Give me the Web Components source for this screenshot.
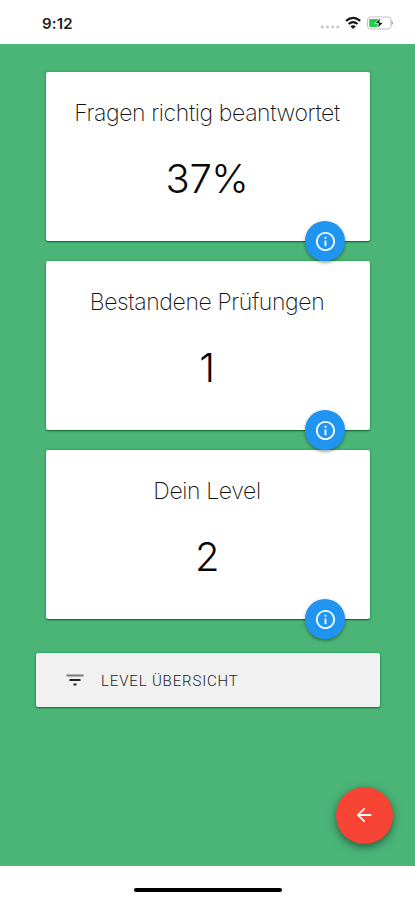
<!DOCTYPE html>
<html lang="de">
<head>
<meta charset="utf-8">
<title>Statistik</title>
<style>
html,body{margin:0;height:100%;background:#fff}
body{font-family:Inter,"Liberation Sans",sans-serif;color:#111}
</style>
</head>
<body>
<stats-app></stats-app>
<script>
const define = (name, html) => customElements.define(name, class extends HTMLElement {
  constructor() {
    super();
    const t = document.createElement('template');
    t.innerHTML = html;
    this.attachShadow({ mode: 'open' }).append(t.content.cloneNode(true));
  }
});

define('status-bar', `
<style>
:host{display:flex;justify-content:space-between;height:44px;box-sizing:border-box;padding:14px 22px 0 42px;background:#fff}
.time{font-size:15px;line-height:19px;font-weight:600;color:#222;letter-spacing:.2px}
svg{display:block}
</style>
<span class="time">9:12</span>
<svg width="77" height="20" viewBox="316 14 77 20">
  <g fill="#c4c4c4"><circle cx="322.2" cy="27" r="1.4"/><circle cx="327.5" cy="27" r="1.4"/><circle cx="332.7" cy="27" r="1.4"/><circle cx="337.8" cy="27" r="1.4"/></g>
  <g fill="none" stroke="#151515" stroke-width="2.2">
    <path d="M346 20.9Q353.1 14.9 360.2 20.9"/>
    <path d="M348.7 24Q353.1 20.2 357.5 24"/>
  </g>
  <path d="M350.4 26.3Q353.1 24.4 355.8 26.3L353.1 29Z" fill="#151515"/>
  <rect x="367.5" y="17" width="23.5" height="12" rx="3.6" fill="#fff" stroke="#c2c2c2" stroke-width="1.1"/>
  <path d="M391.5 20.5Q394.6 23 391.5 25.5Z" fill="#aaa"/>
  <rect x="369.2" y="19" width="10.5" height="8" rx="1" fill="#22cf4c"/>
  <path d="M380.4 18L374.8 23.5H378.4L377.8 28L383.4 22.4H379.8Z" fill="#111" stroke="#fff" stroke-width=".8"/>
</svg>`);

define('info-button', `
<style>
:host{display:flex;align-items:center;justify-content:center;width:40px;height:40px;border-radius:50%;background:#2094f1;box-shadow:0 2px 3px rgba(0,0,0,.25),0 1px 4px rgba(0,0,0,.15)}
svg{display:block}
</style>
<svg width="23" height="23" viewBox="0 0 24 24"><path fill="#f2faff" d="M11 17h2v-6h-2v6zm1-15C6.48 2 2 6.48 2 12s4.480 10 10 10 10-4.480 10-10S17.520 2 12 2zm0 18c-4.410 0-8-3.590-8-8s3.590-8 8-8 8 3.590 8 8-3.590 8-8 8zM11 9h2V7h-2v2z"/></svg>`);

define('stat-card', `
<style>
:host{display:flex;flex-direction:column;align-items:center;position:relative;height:169px;box-sizing:border-box;padding:25px 2px 0 0;background:#fff;border-radius:2px;box-shadow:0 1px 1.5px rgba(0,70,20,.75),0 0 3px rgba(0,150,60,.6)}
.title{font-size:23px;line-height:32px;font-weight:200;letter-spacing:-.38px;color:#111;white-space:nowrap}
.value{margin-top:26px;font-size:40px;line-height:48px;font-weight:300;letter-spacing:-.4px;color:#080808}
info-button{position:absolute;right:25px;bottom:-20px;z-index:1}
</style>
<div class="title"><slot name="title"></slot></div>
<div class="value"><slot></slot></div>
<info-button></info-button>`);

define('level-button', `
<style>
:host{display:flex;align-items:center;height:54px;box-sizing:border-box;padding-left:27px;background:#f1f1f1;border-radius:2px;box-shadow:0 1px 2px rgba(0,60,20,.55),0 0 3px rgba(0,160,70,.8)}
svg{display:block;margin-right:14px}
.label{font-family:Roboto,sans-serif;font-size:15px;line-height:20px;font-weight:300;letter-spacing:.85px;color:#222;white-space:nowrap;padding-top:1px}
</style>
<svg width="24" height="24" viewBox="0 0 24 24"><path d="M3.500 6.500h17v2h-17z" fill="#777"/><path d="M6.500 11h11v2h-11zM10.500 15.500h3v2h-3z" fill="#222"/></svg>
<span class="label"><slot></slot></span>`);

define('back-button', `
<style>
:host{display:flex;align-items:center;justify-content:center;width:57px;height:57px;box-sizing:border-box;padding:0 1px 1px 0;border-radius:50%;background:#f74435;box-shadow:0 3px 6px rgba(0,0,0,.32),0 3px 13px rgba(0,0,0,.2)}
svg{display:block}
</style>
<svg width="22" height="22" viewBox="0 0 24 24"><path fill="#fff5f2" d="M20 11H7.830l5.590-5.590L12 4l-8 8 8 8 1.410-1.410L7.830 13H20v-2z"/></svg>`);

define('home-indicator', `
<style>
:host{display:flex;justify-content:center;height:34px;box-sizing:border-box;padding-top:21.5px;background:#fff}
i{display:block;width:148px;height:4.5px;border-radius:2.5px;background:#000}
</style><i></i>`);

define('stats-app', `
<style>
:host{display:flex;flex-direction:column;width:415px;height:900px;overflow:hidden}
main{flex:1;display:flex;flex-direction:column;background:#4bb578;padding:28px 35px 22px 36px;box-sizing:border-box}
.cards{display:flex;flex-direction:column;gap:20px;margin:0 10px 34px}
.end{display:flex;justify-content:flex-end;margin-top:auto;margin-right:-13px}
</style>
<status-bar></status-bar>
<main>
  <div class="cards">
    <stat-card><span slot="title">Fragen richtig beantwortet</span>37%</stat-card>
    <stat-card><span slot="title">Bestandene Prüfungen</span>1</stat-card>
    <stat-card><span slot="title">Dein Level</span>2</stat-card>
  </div>
  <level-button>LEVEL ÜBERSICHT</level-button>
  <div class="end"><back-button></back-button></div>
</main>
<home-indicator></home-indicator>`);
</script>
</body>
</html>
